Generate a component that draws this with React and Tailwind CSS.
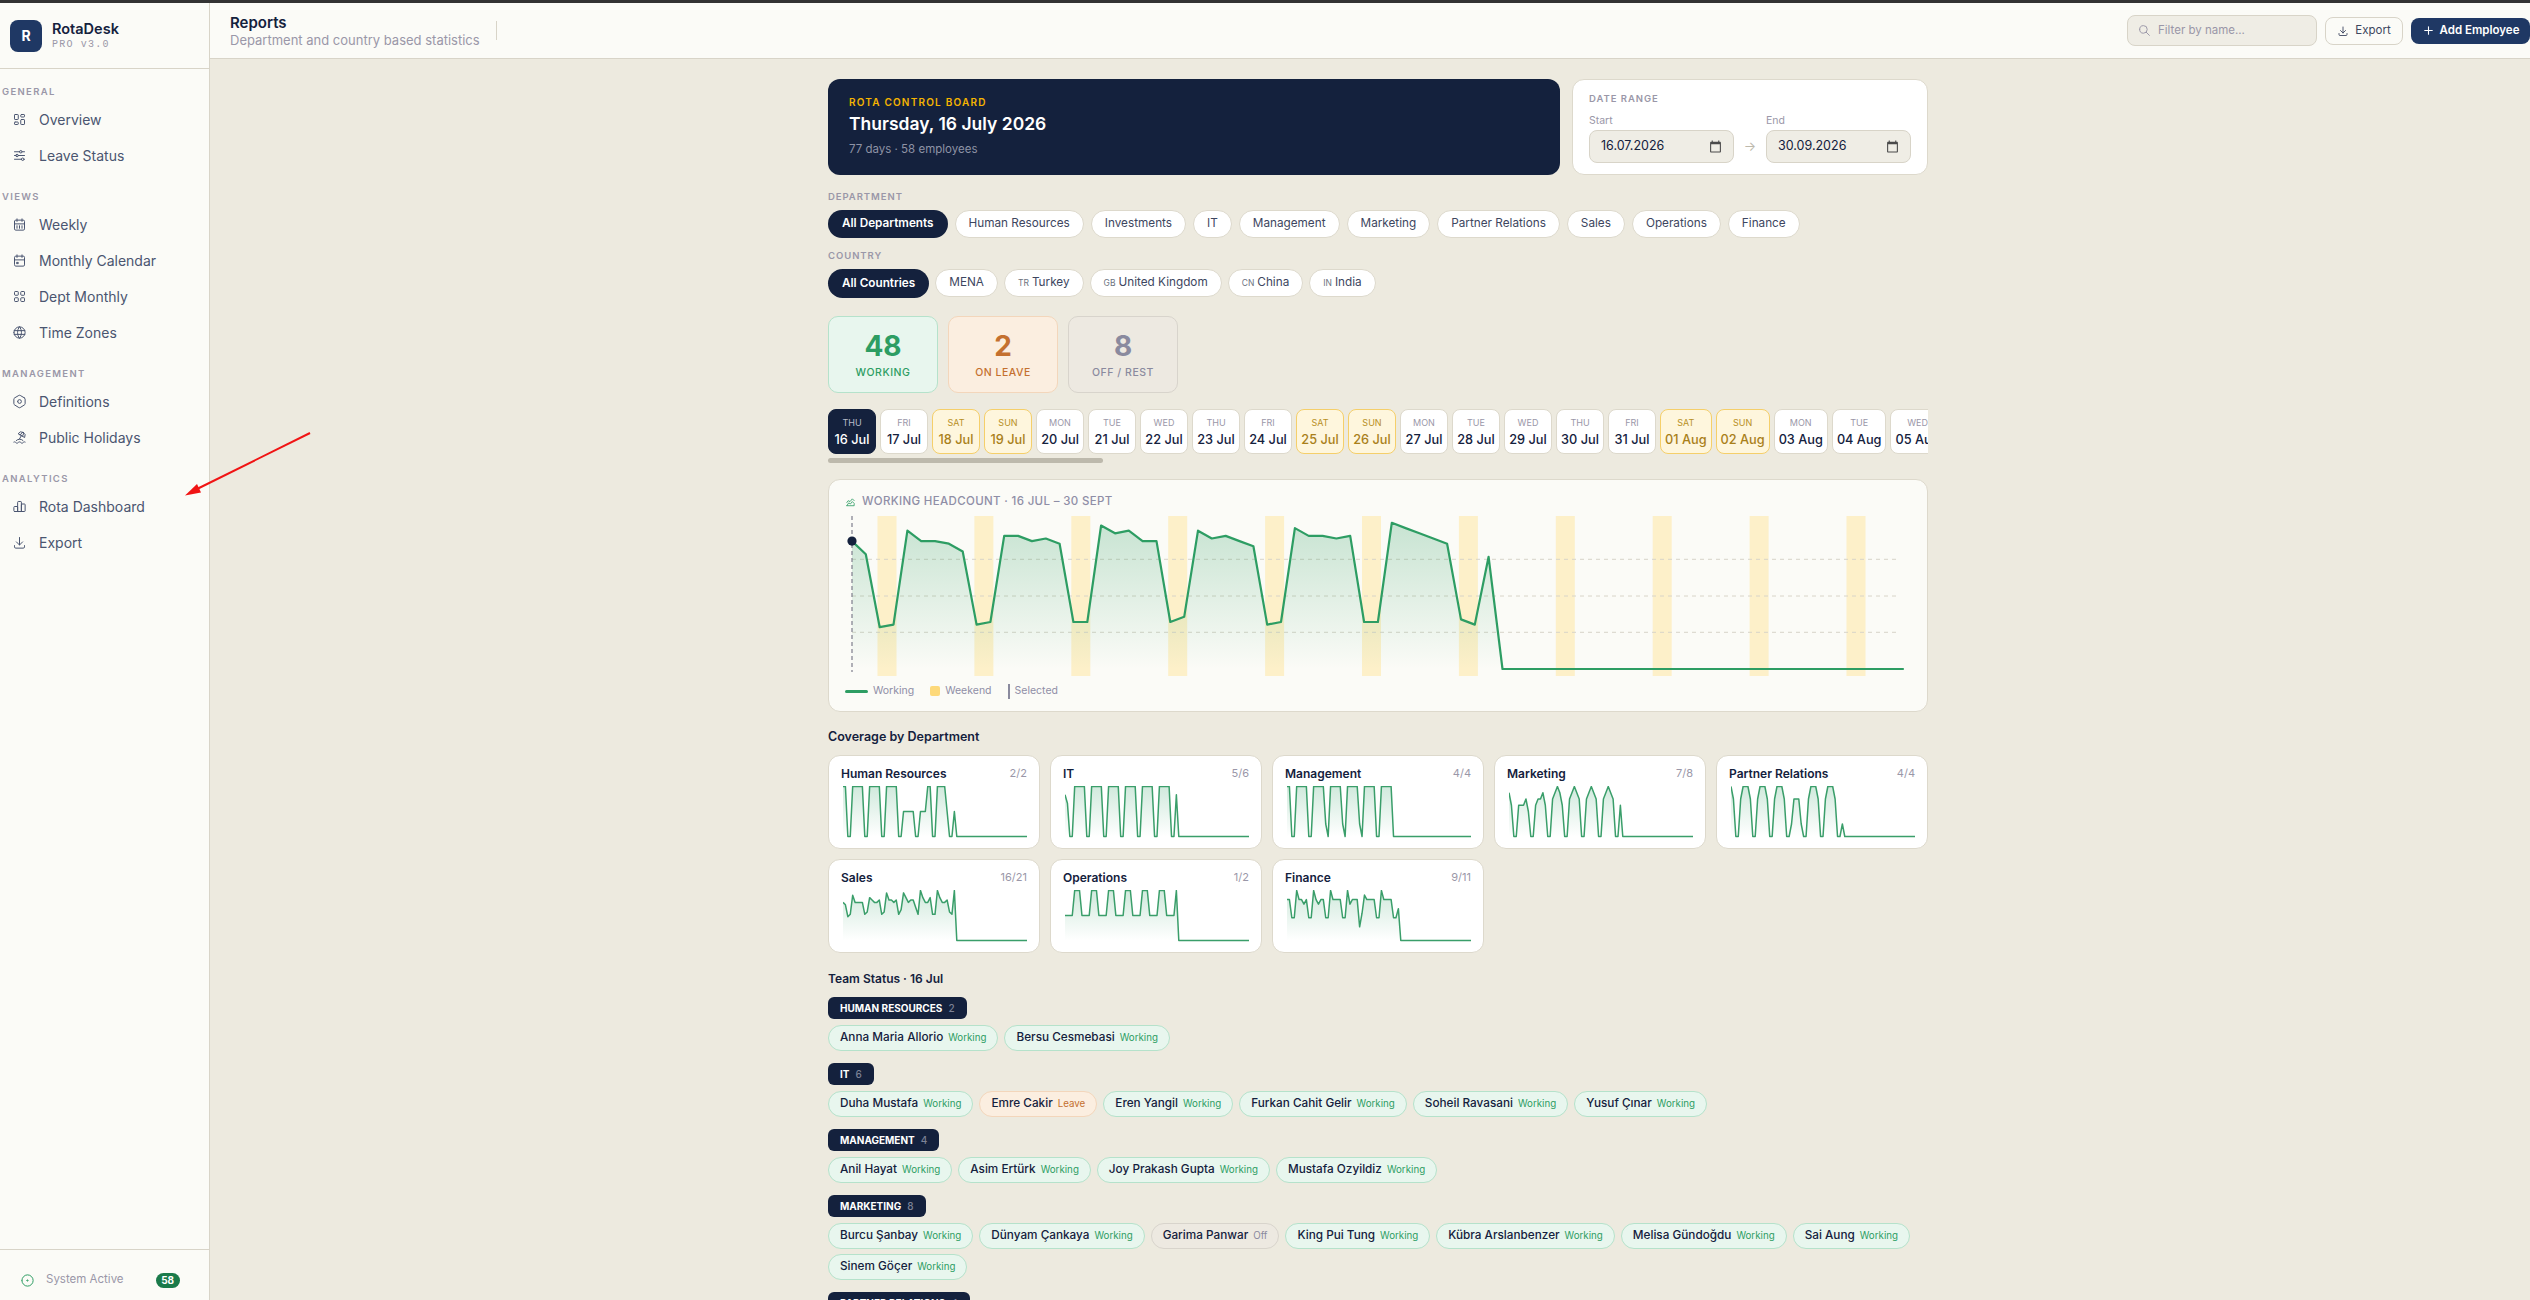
import React from "react";
import {
  TbLayoutDashboard,
  TbAdjustmentsHorizontal,
  TbCalendarWeek,
  TbCalendarEvent,
  TbLayoutGrid,
  TbWorld,
  TbSettings2,
  TbBeach,
  TbChartBar,
  TbDownload,
  TbCircleDot,
  TbSearch,
  TbPlus,
  TbChartAreaLine,
} from "react-icons/tb";

const navGroups = [
  { label: "GENERAL", items: [["Overview", TbLayoutDashboard], ["Leave Status", TbAdjustmentsHorizontal]] },
  {
    label: "VIEWS",
    items: [["Weekly", TbCalendarWeek], ["Monthly Calendar", TbCalendarEvent], ["Dept Monthly", TbLayoutGrid], ["Time Zones", TbWorld]],
  },
  { label: "MANAGEMENT", items: [["Definitions", TbSettings2], ["Public Holidays", TbBeach]] },
  { label: "ANALYTICS", items: [["Rota Dashboard", TbChartBar], ["Export", TbDownload]] },
];

const departments = ["All Departments", "Human Resources", "Investments", "IT", "Management", "Marketing", "Partner Relations", "Sales", "Operations", "Finance"];
const countries = [["", "All Countries"], ["", "MENA"], ["TR", "Turkey"], ["GB", "United Kingdom"], ["CN", "China"], ["IN", "India"]];

const days = [
  ["THU", "16 Jul"], ["FRI", "17 Jul"], ["SAT", "18 Jul"], ["SUN", "19 Jul"], ["MON", "20 Jul"], ["TUE", "21 Jul"], ["WED", "22 Jul"],
  ["THU", "23 Jul"], ["FRI", "24 Jul"], ["SAT", "25 Jul"], ["SUN", "26 Jul"], ["MON", "27 Jul"], ["TUE", "28 Jul"], ["WED", "29 Jul"],
  ["THU", "30 Jul"], ["FRI", "31 Jul"], ["SAT", "01 Aug"], ["SUN", "02 Aug"], ["MON", "03 Aug"], ["TUE", "04 Aug"], ["WED", "05 Aug"],
];

// heads per day for the first 47 days, the rest of the range is empty
const headcount = [
  49, 44, 16, 17, 53, 49, 49, 48, 45, 17, 18, 51, 51, 49, 50, 48, 18, 18, 55, 52, 53, 49, 49, 18, 20, 53, 50, 51, 49, 47, 17, 18, 54, 51, 51, 50, 51, 18, 18,
  56, 54, 52, 50, 48, 19, 17, 43,
];

const coverage = [
  { name: "Human Resources", count: "2/2", max: 2, data: [2,2,0,0,2,2,2,2,2,0,0,2,2,2,2,2,0,0,2,2,2,2,2,0,0,1,1,1,1,1,0,0,1,1,1,2,2,0,0,2,2,2,2,1,0,0,1] },
  { name: "IT", count: "5/6", max: 6, data: [5,4,0,0,6,6,6,6,6,0,0,6,6,6,6,6,0,0,6,6,6,6,6,0,0,6,6,6,6,6,0,0,6,6,6,6,6,0,0,6,6,6,6,6,0,0,5] },
  { name: "Management", count: "4/4", max: 4, data: [4,4,0,0,4,4,4,4,4,0,0,4,4,4,4,4,1,0,4,4,4,4,4,1,0,4,4,4,4,4,1,0,4,4,4,4,4,0,0,4,4,4,4,4,0,0,0] },
  { name: "Marketing", count: "7/8", max: 8, data: [7,5,0,0,5,5,5,6,4,0,0,5,6,6,7,5,0,0,6,7,8,7,5,0,0,6,7,8,7,6,0,0,6,7,8,7,6,0,0,6,7,8,7,6,0,0,5] },
  { name: "Partner Relations", count: "4/4", max: 4, data: [4,3,0,0,3,4,4,4,3,0,0,3,4,4,4,3,0,0,3,4,4,4,3,0,0,1,3,3,3,1,0,0,3,4,4,4,3,0,0,3,4,4,4,3,0,0,1] },
  { name: "Sales", count: "16/21", max: 21, data: [16,15,10,11,19,16,16,16,16,11,12,18,17,16,16,17,11,12,20,17,17,16,17,11,13,20,18,16,17,17,14,11,21,18,16,16,18,11,11,21,18,16,16,17,12,11,21] },
  { name: "Operations", count: "1/2", max: 2, data: [1,1,1,1,2,2,2,1,1,1,1,2,2,2,1,1,1,1,2,2,2,1,1,1,1,2,2,2,1,1,1,1,2,2,2,1,1,1,1,2,2,2,1,1,1,1,2] },
  { name: "Finance", count: "9/11", max: 11, data: [9,9,5,5,11,9,9,8,9,5,5,11,9,8,9,9,5,5,11,9,9,9,9,5,5,11,8,9,9,9,3,6,10,9,9,9,9,5,5,11,9,9,9,9,5,5,7] },
];

const teams = [
  { name: "HUMAN RESOURCES", count: 2, people: [["Anna Maria Allorio", "w"], ["Bersu Cesmebasi", "w"]] },
  {
    name: "IT",
    count: 6,
    people: [["Duha Mustafa", "w"], ["Emre Cakir", "l"], ["Eren Yangil", "w"], ["Furkan Cahit Gelir", "w"], ["Soheil Ravasani", "w"], ["Yusuf Çınar", "w"]],
  },
  { name: "MANAGEMENT", count: 4, people: [["Anil Hayat", "w"], ["Asim Ertürk", "w"], ["Joy Prakash Gupta", "w"], ["Mustafa Ozyildiz", "w"]] },
  {
    name: "MARKETING",
    count: 8,
    people: [
      ["Burcu Şanbay", "w"], ["Dünyam Çankaya", "w"], ["Garima Panwar", "o"], ["King Pui Tung", "w"],
      ["Kübra Arslanbenzer", "w"], ["Melisa Gündoğdu", "w"], ["Sai Aung", "w"], ["Sinem Göçer", "w"],
    ],
  },
  { name: "PARTNER RELATIONS", count: 4, people: [] },
];

const statusStyle = {
  w: { chip: "bg-[#e8f6ee] border-[#b5e2cb]", text: "text-[#2d9d63]", label: "Working" },
  l: { chip: "bg-[#fbeee0] border-[#f3d6bb]", text: "text-[#c4702f]", label: "Leave" },
  o: { chip: "bg-[#ede9e1] border-[#d8d4cc]", text: "text-[#8a8a9e]", label: "Off" },
};

const CalendarGlyph = () => (
  <svg width="13" height="13" viewBox="0 0 24 24" fill="#4a4a4a" className="shrink-0">
    <path d="M20 3h-1V1h-2v2H7V1H5v2H4c-1.1 0-2 .9-2 2v16c0 1.1.9 2 2 2h16c1.1 0 2-.9 2-2V5c0-1.1-.9-2-2-2zm0 18H4V8h16v13z" />
  </svg>
);

const HeadcountChart = () => {
  const stepX = 13.84;
  const x = (i) => 852 + stepX * i;
  const y = (h) => 669 - 2.61 * h;
  const values = [...headcount, ...Array(30).fill(0)];
  const line = values.map((h, i) => `${x(i).toFixed(1)},${y(h).toFixed(1)}`).join(" ");
  return (
    <svg width="1066" height="166" viewBox="845 513 1066 166" className="block mt-[4px]">
      <defs>
        <linearGradient id="headFill" x1="0" y1="0" x2="0" y2="1">
          <stop offset="0%" stopColor="#2d9d63" stopOpacity="0.25" />
          <stop offset="100%" stopColor="#2d9d63" stopOpacity="0" />
        </linearGradient>
      </defs>
      {Array.from({ length: 11 }).map((_, k) => (
        <rect key={k} x={877.5 + 96.9 * k} y="516" width="19" height="160" fill="#fde9b0" fillOpacity="0.65" />
      ))}
      {[559.3, 596, 632.3].map((gy) => (
        <line key={gy} x1="852" x2="1898" y1={gy} y2={gy} stroke="#d8d4c8" strokeWidth="1" strokeDasharray="4 4" />
      ))}
      <polygon points={`852,669 ${line} ${x(76)},669`} fill="url(#headFill)" />
      <line x1="852" x2="852" y1="516" y2="672" stroke="#7d7d8c" strokeWidth="1.2" strokeDasharray="4 3" />
      <polyline points={line} fill="none" stroke="#2d9d63" strokeWidth="2.2" strokeLinejoin="round" />
      <circle cx="852" cy={y(49)} r="4.6" fill="#14213d" />
    </svg>
  );
};

const Sparkline = ({ id, data, max }) => {
  const values = [...data, ...Array(30).fill(0)];
  const x = (i) => (i * 184) / 76;
  const y = (v) => 50.5 - (v / max) * 50;
  const line = values.map((v, i) => `${x(i).toFixed(2)},${y(v).toFixed(2)}`).join(" ");
  return (
    <svg width="184" height="52" viewBox="0 0 184 52" className="block mt-[5px] ml-[2px]">
      <defs>
        <linearGradient id={id} x1="0" y1="0" x2="0" y2="1">
          <stop offset="0%" stopColor="#2d9d63" stopOpacity="0.22" />
          <stop offset="100%" stopColor="#2d9d63" stopOpacity="0" />
        </linearGradient>
      </defs>
      <polygon points={`0,50.5 ${line} 184,50.5`} fill={`url(#${id})`} />
      <polyline points={line} fill="none" stroke="#3a9e6a" strokeWidth="1.5" strokeLinejoin="round" />
    </svg>
  );
};

const App = () => {
  return (
    <div className="relative flex flex-col h-screen w-full overflow-hidden bg-[#edeadf] text-[#14213d] font-['Inter',sans-serif]">
      <div className="h-[3px] shrink-0 bg-[#333333]" />
      <div className="flex flex-1 min-h-0">
        <aside className="flex flex-col w-[210px] shrink-0 bg-[#fbfbf7] border-r border-[#d8d4c8]">
          <div className="flex items-center gap-[10px] h-[66px] shrink-0 pl-[10px] border-b border-[#d8d4c8]">
            <div className="flex items-center justify-center w-[32px] h-[32px] rounded-[8px] bg-[#1f3864] text-white text-[14px] font-bold">R</div>
            <div className="flex flex-col">
              <span className="text-[14.5px] leading-[18px] font-semibold">RotaDesk</span>
              <span className="mt-[1px] text-[10px] leading-[12px] tracking-[0.12em] text-[#9a97a8] font-['Liberation_Mono',monospace]">PRO v3.0</span>
            </div>
          </div>
          <nav className="flex-1 pt-[17px]">
            {navGroups.map((group) => (
              <div key={group.label} className="mb-[18px]">
                <div className="h-[12px] mb-[3px] pl-[2px] text-[9.5px] leading-[12px] font-semibold tracking-[0.14em] text-[#9a97a8]">{group.label}</div>
                {group.items.map(([name, Icon]) => (
                  <div key={name} className="flex items-center gap-[12px] h-[36px] pl-[12px] text-[14px] text-[#4a5570]">
                    <Icon size={15} strokeWidth={1.6} className="shrink-0 text-[#4a5570]" />
                    <span>{name}</span>
                  </div>
                ))}
              </div>
            ))}
          </nav>
          <div className="flex items-center h-[51px] shrink-0 pl-[20px] pt-[10px] border-t border-[#d8d4c8]">
            <TbCircleDot size={15} strokeWidth={1.6} className="shrink-0 text-[#2d9d63]" />
            <span className="ml-[11px] text-[11.5px] text-[#9a97a8]">System Active</span>
            <span className="ml-[32px] flex items-center justify-center w-[24px] h-[15px] rounded-full bg-[#1a7a4a] text-white text-[10px] font-bold">58</span>
          </div>
        </aside>

        <div className="flex flex-col flex-1 min-w-0">
          <header className="flex items-center h-[56px] shrink-0 pl-[20px] bg-[#fbfbf7] border-b border-[#d8d4c8]">
            <div className="flex flex-col">
              <span className="text-[15px] leading-[19px] font-semibold">Reports</span>
              <span className="text-[13px] leading-[17px] text-[#9a97a8]">Department and country based statistics</span>
            </div>
            <div className="w-px h-[19px] ml-[16px] bg-[#d8d4c8]" />
            <div className="flex items-center gap-[8px] ml-auto">
              <div className="flex items-center gap-[7px] w-[190px] h-[31px] pl-[10px] rounded-[8px] bg-[#efede5] border border-[#d8d4c8] text-[#9a97a8] text-[11.5px]">
                <TbSearch size={13} strokeWidth={1.8} />
                <span>Filter by name...</span>
              </div>
              <div className="flex items-center justify-center gap-[6px] w-[78px] h-[28px] rounded-[8px] border border-[#d8d4c8] text-[#3d4660] text-[11.5px]">
                <TbDownload size={12} strokeWidth={1.8} />
                <span>Export</span>
              </div>
              <div className="flex items-center justify-center gap-[5px] w-[119px] h-[26px] rounded-[8px] bg-[#1f3864] text-white text-[11.5px] font-semibold">
                <TbPlus size={13} strokeWidth={2} />
                <span>Add Employee</span>
              </div>
            </div>
          </header>

          <main className="flex justify-center flex-1 min-h-0 pl-4 pt-[20px] overflow-hidden">
            <div className="w-[1100px] shrink-0">
              <div className="flex gap-[12px] h-[96px]">
                <div className="flex flex-col w-[732px] pl-[21px] pt-[16px] rounded-[12px] bg-[#14213d]">
                  <span className="text-[10px] leading-[14px] font-semibold tracking-[0.12em] text-[#f5b400]">ROTA CONTROL BOARD</span>
                  <span className="mt-[2px] text-[17.5px] leading-[26px] font-semibold text-white">Thursday, 16 July 2026</span>
                  <span className="mt-[4px] text-[11.5px] leading-[16px] text-[#8e93a5]">77 days · 58 employees</span>
                </div>
                <div className="flex-1 pl-[16px] pt-[13px] rounded-[12px] bg-white border border-[#ddd9cc]">
                  <div className="text-[9.5px] leading-[12px] font-semibold tracking-[0.1em] text-[#9a97a8]">DATE RANGE</div>
                  <div className="flex items-end mt-[9px]">
                    <div>
                      <div className="text-[10.5px] leading-[13px] text-[#9a97a8]">Start</div>
                      <div className="flex items-center justify-between w-[145px] h-[33px] mt-[3px] px-[11px] rounded-[8px] bg-[#efede5] border border-[#d8d4c8] text-[12.5px]">
                        <span>16.07.2026</span>
                        <CalendarGlyph />
                      </div>
                    </div>
                    <div className="flex items-center justify-center w-[32px] h-[33px] text-[13px] text-[#bdb9ac]">→</div>
                    <div>
                      <div className="text-[10.5px] leading-[13px] text-[#9a97a8]">End</div>
                      <div className="flex items-center justify-between w-[145px] h-[33px] mt-[3px] px-[11px] rounded-[8px] bg-[#efede5] border border-[#d8d4c8] text-[12.5px]">
                        <span>30.09.2026</span>
                        <CalendarGlyph />
                      </div>
                    </div>
                  </div>
                </div>
              </div>

              <div className="mt-[16px] h-[12px] text-[9.5px] leading-[12px] font-semibold tracking-[0.1em] text-[#9a97a8]">DEPARTMENT</div>
              <div className="flex gap-[7px] mt-[7px]">
                {departments.map((d, i) => (
                  <div
                    key={d}
                    className={
                      i === 0
                        ? "flex items-center h-[28px] px-[14px] rounded-full bg-[#14213d] text-white text-[11.75px] font-semibold"
                        : "flex items-center h-[28px] px-[13px] rounded-full bg-white border border-[#ddd9cc] text-[#3d4660] text-[11.75px]"
                    }
                  >
                    {d}
                  </div>
                ))}
              </div>

              <div className="mt-[12px] h-[12px] text-[9.5px] leading-[12px] font-semibold tracking-[0.1em] text-[#9a97a8]">COUNTRY</div>
              <div className="flex gap-[6px] mt-[7px]">
                {countries.map(([code, c], i) => (
                  <div
                    key={c}
                    className={
                      i === 0
                        ? "flex items-center h-[29px] px-[14px] rounded-full bg-[#14213d] text-white text-[11.75px] font-semibold"
                        : "flex items-center gap-[3px] h-[28px] px-[13px] rounded-full bg-white border border-[#ddd9cc] text-[#3d4660] text-[11.75px]"
                    }
                  >
                    {code && <span className="text-[8.5px] text-[#6b7280]">{code}</span>}
                    <span>{c}</span>
                  </div>
                ))}
              </div>

              <div className="flex gap-[10px] mt-[18px]">
                <div className="flex flex-col items-center w-[110px] h-[77px] pt-[12px] rounded-[10px] bg-[#e8f6ee] border border-[#b5e2cb]">
                  <span className="text-[28px] leading-[34px] font-bold text-[#2d9d63]">48</span>
                  <span className="mt-[3px] text-[10.5px] leading-[14px] font-medium tracking-[0.05em] text-[#2d9d63]">WORKING</span>
                </div>
                <div className="flex flex-col items-center w-[110px] h-[77px] pt-[12px] rounded-[10px] bg-[#fbeee0] border border-[#f3d6bb]">
                  <span className="text-[28px] leading-[34px] font-bold text-[#c4702f]">2</span>
                  <span className="mt-[3px] text-[10.5px] leading-[14px] font-medium tracking-[0.05em] text-[#c4702f]">ON LEAVE</span>
                </div>
                <div className="flex flex-col items-center w-[110px] h-[77px] pt-[12px] rounded-[10px] bg-[#ede9e1] border border-[#d8d4cc]">
                  <span className="text-[28px] leading-[34px] font-bold text-[#8a8a9e]">8</span>
                  <span className="mt-[3px] text-[10.5px] leading-[14px] font-medium tracking-[0.05em] text-[#8a8a9e]">OFF / REST</span>
                </div>
              </div>

              <div className="flex gap-[4px] mt-[16px] overflow-hidden">
                {days.map(([dow, date], i) => {
                  const weekend = dow === "SAT" || dow === "SUN";
                  let box = "bg-white border-[#ddd9cc]";
                  let top = "text-[#9a97a8]";
                  let bottom = "text-[#14213d]";
                  if (i === 0) {
                    box = "bg-[#14213d] border-[#14213d]";
                    top = "text-[#b8bcc9]";
                    bottom = "text-white";
                  } else if (weekend) {
                    box = "bg-[#fef6dd] border-[#f5cf6a]";
                    top = "text-[#b8901f]";
                    bottom = "text-[#a9801a]";
                  }
                  return (
                    <div key={date} className={`flex flex-col items-center shrink-0 min-w-[48px] h-[45px] px-[4px] pt-[7px] rounded-[8px] border ${box}`}>
                      <span className={`text-[9px] leading-[12px] ${top}`}>{dow}</span>
                      <span className={`mt-[2px] text-[12.75px] leading-[18px] font-medium whitespace-nowrap ${bottom}`}>{date}</span>
                    </div>
                  );
                })}
              </div>
              <div className="w-[275px] h-[5px] mt-[4px] rounded-full bg-[#bdb9ac]" />

              <div className="mt-[16px] h-[233px] px-[16px] pt-[15px] rounded-[12px] bg-[#fbfbf7] border border-[#ddd9cc]">
                <div className="flex items-center gap-[6px] h-[14px] text-[11.5px] font-medium tracking-[0.03em] text-[#8f8ea6]">
                  <TbChartAreaLine size={11} strokeWidth={1.8} className="text-[#2d9d63]" />
                  <span>WORKING HEADCOUNT · 16 JUL – 30 SEPT</span>
                </div>
                <HeadcountChart />
                <div className="flex items-center h-[14px] mt-[5px] text-[10.5px] text-[#8f8ea6]">
                  <span className="w-[23px] h-[3px] rounded-full bg-[#2d9d63]" />
                  <span className="ml-[5px]">Working</span>
                  <span className="ml-[16px] w-[10px] h-[10px] rounded-[2px] bg-[#fdd97a]" />
                  <span className="ml-[5px]">Weekend</span>
                  <span className="ml-[16px] w-[2px] h-[15px] bg-[#8a8a9e]" />
                  <span className="ml-[5px]">Selected</span>
                </div>
              </div>

              <div className="mt-[18px] h-[14px] text-[12.5px] leading-[14px] font-semibold">Coverage by Department</div>
              <div className="grid grid-cols-5 gap-[10px] mt-[11px]">
                {coverage.map((c, i) => (
                  <div key={c.name} className="h-[94px] px-[12px] pt-[10px] rounded-[12px] bg-white border border-[#ddd9cc]">
                    <div className="flex items-center justify-between h-[15px]">
                      <span className="text-[12px] font-semibold">{c.name}</span>
                      <span className="text-[11px] text-[#9a97a8]">{c.count}</span>
                    </div>
                    <Sparkline id={`spark${i}`} data={c.data} max={c.max} />
                  </div>
                ))}
              </div>

              <div className="mt-[19px] h-[14px] text-[12px] leading-[14px] font-semibold">Team Status · 16 Jul</div>
              <div className="flex flex-col gap-[12px] mt-[11px]">
                {teams.map((team) => (
                  <div key={team.name}>
                    <div className="flex items-center gap-[6px] w-fit h-[22px] px-[12px] rounded-[6px] bg-[#14213d] text-white text-[10px] font-bold">
                      <span>{team.name}</span>
                      <span className="text-[#7d8296] font-medium">{team.count}</span>
                    </div>
                    {team.people.length > 0 && (
                      <div className="flex flex-wrap gap-x-[6px] gap-y-[5px] mt-[6px]">
                        {team.people.map(([name, status]) => (
                          <div key={name} className={`flex items-center gap-[5px] h-[26px] px-[11px] rounded-full border ${statusStyle[status].chip}`}>
                            <span className="text-[11.75px] font-medium">{name}</span>
                            <span className={`text-[9.75px] ${statusStyle[status].text}`}>{statusStyle[status].label}</span>
                          </div>
                        ))}
                      </div>
                    )}
                  </div>
                ))}
              </div>
            </div>
          </main>
        </div>
      </div>

      <svg width="140" height="70" viewBox="175 428 140 70" className="absolute left-[175px] top-[428px] pointer-events-none">
        <line x1="310" y1="433" x2="195" y2="490" stroke="#f01414" strokeWidth="2" />
        <polygon points="185,495.5 197,484 201,492.5" fill="#f01414" />
      </svg>
    </div>
  );
};

export default App;
